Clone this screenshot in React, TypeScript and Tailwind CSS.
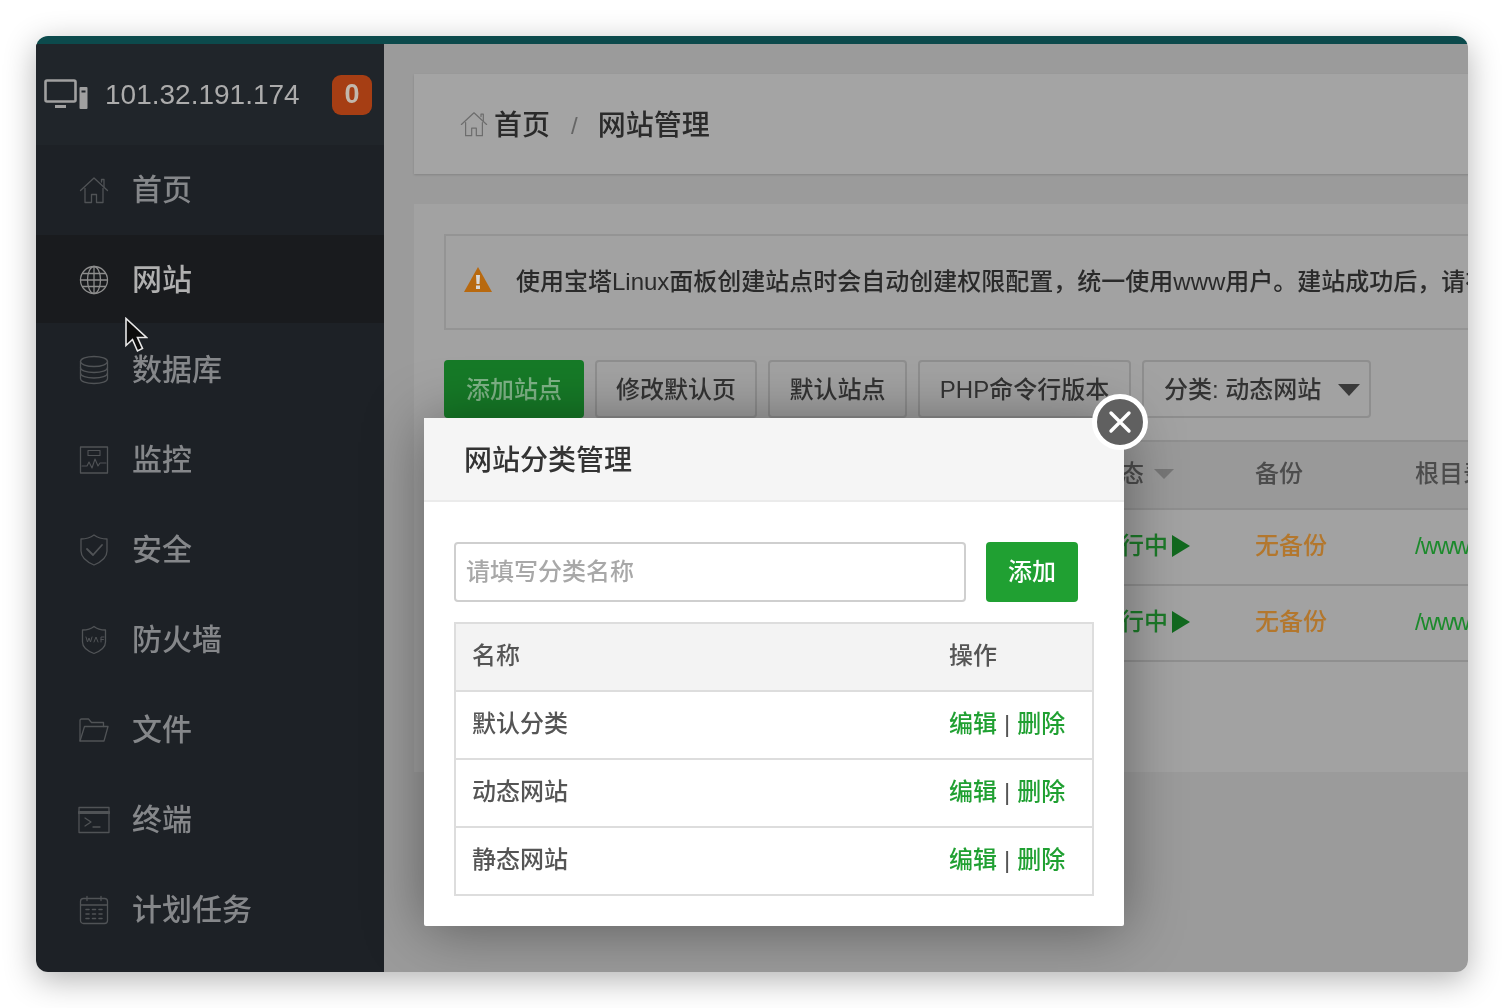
import React from "react";

const S = { fill: "none", stroke: "currentColor", strokeWidth: 1.3, strokeLinejoin: "round" as const, strokeLinecap: "round" as const };

const HomeIcon = ({ className = "" }: { className?: string }) => (
  <svg viewBox="0 0 30 30" className={className} {...S}>
    <path d="M1.5 15.5 15 3l13.500 12.500" />
    <path d="M22.500 7V4.500h2.500v7" />
    <path d="M6 13.500V27.500h6.500v-8h5v8H24V13.500" />
  </svg>
);
const GlobeIcon = () => (
  <svg viewBox="0 0 30 30" className="w-[30px] h-[30px] text-[#8d8d8d]" {...S}>
    <circle cx="15" cy="15" r="13.5" />
    <ellipse cx="15" cy="15" rx="6.5" ry="13.5" />
    <path d="M15 1.5v27M1.5 15h27M3.5 8.5h23M3.5 21.5h23" />
  </svg>
);
const DbIcon = () => (
  <svg viewBox="0 0 30 30" className="w-[30px] h-[30px]" {...S}>
    <ellipse cx="15" cy="6.5" rx="13.5" ry="5" />
    <path d="M1.5 6.5v17c0 3 6 5 13.5 5s13.5-2 13.5-5v-17" />
    <path d="M1.5 12.5c0 3 6 5 13.5 5s13.5-2 13.5-5M1.5 18c0 3 6 5 13.5 5s13.5-2 13.5-5" />
  </svg>
);
const MonitorIcon = () => (
  <svg viewBox="0 0 30 30" className="w-[30px] h-[30px]" {...S}>
    <rect x="1.5" y="2" width="27" height="26" />
    <path d="M3 21h5l2-4 3 6 3-9 3 7 2-3h6" strokeWidth={1.1} />
    <rect x="9" y="5.5" width="12" height="5" strokeWidth={1.1} />
  </svg>
);
const ShieldIcon = () => (
  <svg viewBox="0 0 30 34" className="w-[30px] h-[34px]" {...S}>
    <path d="M15 2c4 3 8 4 13 4v12c0 7-6 11-13 14C8 29 2 25 2 18V6c5 0 9-1 13-4Z" />
    <path d="m8 16 6 6 9-10" strokeWidth={1.8} />
  </svg>
);
const WafIcon = () => (
  <svg viewBox="0 0 28 30" className="w-[28px] h-[30px]" {...S}>
    <path d="M14 1.5c3 2.500 6 3.500 11.500 3.500v12c0 5.500-5 9-11.500 11.500C7.500 26 2.500 22.500 2.500 17V5C8 5 11 4 14 1.500Z" />
    <path d="M6 12l1.500 5 1.500-4 1.500 4L12 12M14 17l2-5 2 5M21 17v-5h3M21 14.500h2.500" strokeWidth={1} />
  </svg>
);
const FolderIcon = () => (
  <svg viewBox="0 0 32 26" className="w-[32px] h-[26px]" {...S}>
    <path d="M2 24V3.500C2 2.500 2.500 2 3.500 2h7l3 3.500h12v4" />
    <path d="M2 24h24l4-14.500H6.500Z" />
  </svg>
);
const TermIcon = () => (
  <svg viewBox="0 0 32 28" className="w-[32px] h-[28px]" {...S}>
    <rect x="1" y="1.500" width="30" height="25" />
    <path d="M1 6.500h30" strokeWidth={3} />
    <path d="m7 12 6 4-6 4M15 21h7" />
  </svg>
);
const CalIcon = () => (
  <svg viewBox="0 0 30 30" className="w-[30px] h-[30px]" {...S}>
    <rect x="1.500" y="3.500" width="27" height="25" rx="3" />
    <path d="M1.500 10h27M8 1.500v4M22 1.500v4" />
    <path d="M7 14.500h3M13.500 14.500h3M20 14.500h3M7 19h3M13.500 19h3M20 19h3M7 23.500h3M13.500 23.500h3M20 23.500h3" strokeWidth={1.600} />
  </svg>
);

const nav: { label: string; icon: React.ReactNode; active?: boolean }[] = [
  { label: "首页", icon: <HomeIcon className="w-[30px] h-[30px]" /> },
  { label: "网站", icon: <GlobeIcon />, active: true },
  { label: "数据库", icon: <DbIcon /> },
  { label: "监控", icon: <MonitorIcon /> },
  { label: "安全", icon: <ShieldIcon /> },
  { label: "防火墙", icon: <WafIcon /> },
  { label: "文件", icon: <FolderIcon /> },
  { label: "终端", icon: <TermIcon /> },
  { label: "计划任务", icon: <CalIcon /> },
];

const Sidebar = () => (
  <aside className="w-[348px] shrink-0 bg-[#1d2126] flex flex-col">
    <div className="h-[101px] shrink-0 bg-[#20252a] flex items-center pl-[8px] pr-[12px] text-[#acacac]">
      <svg viewBox="0 0 44 32" className="w-[44px] h-[32px] text-[#a0a0a0]" fill="none" stroke="currentColor" strokeWidth={2.600}>
        <rect x="1.500" y="1.500" width="30" height="21" rx="1.500" />
        <path d="M11 27.500h11" strokeWidth={3} />
        <rect x="35.500" y="8" width="8" height="22" rx="1" fill="currentColor" stroke="none" />
        <path d="M37.500 12.500h4" stroke="#20252a" strokeWidth={2} />
      </svg>
      <span className="ml-[17px] text-[28px] leading-none">101.32.191.174</span>
      <span className="ml-auto w-[40px] h-[40px] rounded-[9px] bg-[#a63e14] text-[#c2b8ad] font-bold text-[27px] flex items-center justify-center">0</span>
    </div>
    {nav.map((n) => (
      <div key={n.label} className={`shrink-0 flex items-center pl-[42px] ${n.active ? "h-[88px] mb-[2px] pt-[2px] bg-[#191b1e] text-[#b0b0b0]" : "h-[90px] text-[#85878a]"}`}>
        <span className={`w-[32px] flex justify-center ${n.active ? "text-[#8d8d8d]" : "text-[#505356]"}`}>{n.icon}</span>
        <span className="ml-[22px] text-[30px] leading-none font-medium">{n.label}</span>
      </div>
    ))}
  </aside>
);

const Btn = ({ className, children }: { className: string; children: React.ReactNode }) => (
  <div className={`h-[58px] pt-[2px] flex items-center border-2 border-[#8e8e8e] rounded-[4px] text-[24px] text-[#333333] whitespace-nowrap ${className}`}>{children}</div>
);

const Row = () => (
  <div className="h-[76px] pb-[2px] border-b-2 border-[#8f8f8f] flex items-center text-[24px] whitespace-nowrap">
    <span className="w-[652px]" />
    <span className="w-[159px] text-[#1c7a29] flex items-center">
      运行中
      <svg viewBox="0 0 18 22" className="w-[18px] h-[22px] ml-[4px] text-[#12691f]"><path d="M0 0l18 11L0 22Z" fill="currentColor" /></svg>
    </span>
    <span className="w-[160px] text-[#b3772d]">无备份</span>
    <span className="text-[#1c8a2c] tracking-[-1px]">/www/wwwroot</span>
  </div>
);

const Main = () => (
  <main className="flex-1 min-w-0 bg-[#9b9b9b] pl-[30px] pt-[30px] overflow-hidden font-medium">
    <div className="w-[1200px] h-[100px] bg-[#a4a4a4] shadow-[0_1px_2px_rgba(0,0,0,0.15)] flex items-center pl-[46px] pt-[4px] text-[28px] text-[#2a2a2a]">
      <HomeIcon className="w-[28px] h-[28px] text-[#6d6d6d] -mt-[4px]" />
      <span className="ml-[6px]">首页</span>
      <span className="ml-[21px] text-[24px] text-[#666]">/</span>
      <span className="ml-[20px]">网站管理</span>
    </div>
    <div className="w-[1200px] h-[568px] mt-[30px] bg-[#a2a2a2] pt-[30px] pl-[30px]">
      <div className="h-[96px] border-2 border-[#949494] flex items-center pl-[18px] text-[24px] text-[#2a2a2a] whitespace-nowrap">
        <svg viewBox="0 0 28 25" className="w-[28px] h-[25px] shrink-0 -mt-[5px]"><path d="M14 0 28 25H0Z" fill="#b8690f" /><path d="M12 8h4l-.5 9h-3ZM12 18.500h4v3.500h-4Z" fill="#d8d8d8" /></svg>
        <span className="ml-[24px]">使用宝塔Linux面板创建站点时会自动创建权限配置，统一使用www用户。建站成功后，请在[配置文件]中</span>
      </div>
      <div className="mt-[30px] flex gap-[11px]">
        <div className="h-[58px] px-[22px] pt-[2px] flex items-center rounded-[4px] bg-[#167a27] text-[24px] text-[#7fb387] whitespace-nowrap">添加站点</div>
        <Btn className="w-[162px] justify-center">修改默认页</Btn>
        <Btn className="w-[139px] justify-center">默认站点</Btn>
        <Btn className="w-[213px] justify-center">PHP命令行版本</Btn>
        <Btn className="w-[229px] pl-[20px]">
          分类: 动态网站
          <svg viewBox="0 0 22 12" className="w-[22px] h-[12px] ml-[17px] text-[#3a3a3a]"><path d="M0 0h22L11 12Z" fill="currentColor" /></svg>
        </Btn>
      </div>
      <div className="mt-[22px] border-t-2 border-[#8f8f8f]">
        <div className="h-[68px] pb-[2px] bg-[#999999] border-b-2 border-[#8f8f8f] flex items-center text-[24px] text-[#4c4c4c] whitespace-nowrap">
          <span className="w-[652px]" />
          <span className="w-[159px] flex items-center">
            状态
            <svg viewBox="0 0 20 10" className="w-[20px] h-[10px] ml-[10px] text-[#777]"><path d="M0 0h20L10 10Z" fill="currentColor" /></svg>
          </span>
          <span className="w-[160px]">备份</span>
          <span>根目录</span>
        </div>
        <Row />
        <Row />
      </div>
    </div>
  </main>
);

const Cursor = () => (
  <svg viewBox="0 0 24 36" className="absolute left-[88px] top-[281px] w-[24px] h-[36px]">
    <path d="M2 1.500v27l6.500-6 5 11.500 5-2.500-5-11h9Z" fill="#0c0c0c" stroke="#e8e8e8" strokeWidth={1.600} />
  </svg>
);

const acts = ["默认分类", "动态网站", "静态网站"];

const Modal = () => (
  <div className="absolute left-[388px] top-[382px] w-[700px] h-[508px] bg-white rounded-[2px] shadow-[0_4px_60px_rgba(0,0,0,0.4)] text-[24px] font-medium">
    <div className="h-[84px] pt-[3px] bg-[#f5f5f5] border-b-2 border-[#ebebeb] flex items-center pl-[40px] text-[28px] text-[#333]">网站分类管理</div>
    <div className="px-[30px] pt-[40px]">
      <div className="flex">
        <div className="w-[512px] h-[60px] border-2 border-[#cfcfcf] rounded-[4px] flex items-center pl-[10px] text-[#a8a8a8]">请填写分类名称</div>
        <div className="ml-[20px] w-[92px] h-[60px] rounded-[4px] bg-[#20a032] text-white flex items-center justify-center">添加</div>
      </div>
      <div className="mt-[20px] border-2 border-[#dddddd] text-[#555]">
        <div className="h-[66px] pb-[3px] bg-[#f3f3f3] grid grid-cols-[1fr_143px] items-center pl-[16px]">
          <span>名称</span>
          <span>操作</span>
        </div>
        {acts.map((a) => (
          <div key={a} className="h-[68px] pb-[3px] border-t-2 border-[#dddddd] grid grid-cols-[1fr_143px] items-center pl-[16px]">
            <span>{a}</span>
            <span className="whitespace-nowrap text-[#555]">
              <span className="text-[#20a032]">编辑</span>
              <span className="ml-[7px] mr-[7px]">|</span>
              <span className="text-[#20a032]">删除</span>
            </span>
          </div>
        ))}
      </div>
    </div>
    <div className="absolute -right-[24px] -top-[24px] w-[56px] h-[56px] rounded-full border-[5px] border-white bg-[#606060] flex items-center justify-center">
      <svg viewBox="0 0 24 24" className="w-[24px] h-[24px]"><path d="M3 3l18 18M21 3 3 21" stroke="white" strokeWidth={3.400} strokeLinecap="round" /></svg>
    </div>
  </div>
);

export default function App() {
  return (
    <div className="w-[1504px] h-[1008px] bg-white p-[36px] overflow-hidden font-['Liberation_Sans','Noto_Sans_CJK_SC',sans-serif]">
      <div className="relative w-[1432px] h-[936px] rounded-[12px] shadow-[0_8px_32px_rgba(0,0,0,0.3)]">
        <div className="relative w-full h-full rounded-[12px] overflow-hidden blur-[0.6px]">
          <div className="h-[8px] bg-[#0c4a4c]" />
          <div className="flex h-[928px]">
            <Sidebar />
            <Main />
          </div>
          <Modal />
          <Cursor />
        </div>
      </div>
    </div>
  );
}
